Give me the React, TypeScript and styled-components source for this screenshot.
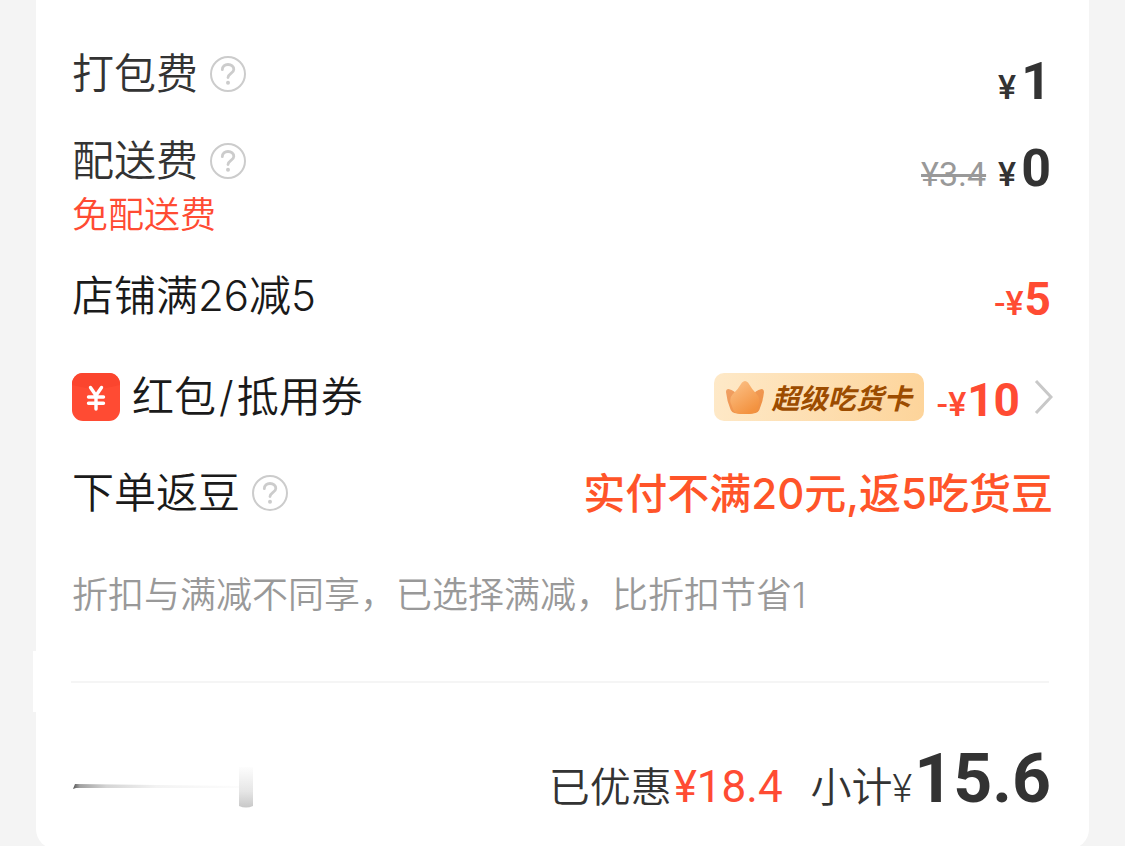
import React from "react";
import styled, { createGlobalStyle } from "styled-components";

const GlobalStyle = createGlobalStyle`
  * { box-sizing: border-box; }
  body {
    margin: 0;
    background: #f4f4f4;
    font-family: Inter, "Noto Sans CJK SC", sans-serif;
    color: #333;
  }
`;

const Card = styled.main`
  margin: 0 36px;
  padding: 44px 36px 32px;
  background: #fff;
  border-radius: 0 0 20px 20px;
`;

const Row = styled.section<{ $gap?: number }>`
  display: flex;
  justify-content: space-between;
  align-items: flex-start;
  margin-top: ${(p) => p.$gap ?? 0}px;
`;

const Label = styled.div<{ $dark?: boolean }>`
  display: flex;
  align-items: center;
  gap: 12px;
  height: 60px;
  font-size: 42px;
  font-weight: 350;
  line-height: 60px;
  white-space: nowrap;
  color: ${(p) => (p.$dark ? "#1a1a1a" : "#333")};
`;

const Slash = styled.span`
  margin: 0 3px;
`;

const HelpButton = styled.button`
  display: flex;
  padding: 0;
  border: 0;
  background: none;
  cursor: pointer;
`;

const FreeNote = styled.p`
  margin: 0;
  font-size: 36px;
  font-weight: 350;
  line-height: 48px;
  color: #ff4b33;
`;

const Price = styled.div<{ $red?: boolean }>`
  display: flex;
  align-items: baseline;
  height: 60px;
  padding-right: 2px;
  font-family: Roboto, sans-serif;
  font-weight: 700;
  line-height: ${(p) => (p.$red ? 66 : 76)}px;
  white-space: nowrap;
  color: ${(p) => (p.$red ? "#ff4b33" : "#333")};
`;

const Sign = styled.span`
  font-size: 34px;
  font-weight: 500;
`;

const Amount = styled.span<{ $large?: boolean }>`
  margin-left: ${(p) => (p.$large ? 5 : 1)}px;
  font-size: ${(p) => (p.$large ? 52 : 46)}px;
`;

const OldPrice = styled.s`
  margin-right: 12px;
  font-size: 34px;
  font-weight: 400;
  color: #999;
`;

const CouponLink = styled.a`
  display: flex;
  align-items: center;
  height: 60px;
  color: inherit;
  text-decoration: none;
`;

const Badge = styled.span`
  display: flex;
  align-items: center;
  gap: 8px;
  height: 48px;
  margin-right: 13px;
  padding: 0 12px;
  border-radius: 10px;
  background: linear-gradient(100deg, #fee9c8, #fdd49a);
  font-family: "Noto Sans CJK SC", sans-serif;
  font-size: 28px;
  font-style: italic;
  font-weight: 700;
  line-height: 48px;
  white-space: nowrap;
  color: #9c4c00;
`;

const Chevron = styled.svg`
  margin-left: 12px;
`;

const Reward = styled.strong`
  font-size: 42px;
  font-weight: 500;
  line-height: 62px;
  white-space: nowrap;
  color: #ff5429;
`;

const Hint = styled.p`
  margin: 46px 0 0;
  font-size: 36px;
  font-weight: 350;
  line-height: 48px;
  color: #999;
`;

const DividerBand = styled.div`
  display: flex;
  align-items: center;
  height: 61px;
  margin: 32px 0 0 -39px;
  padding: 0 4px 0 38px;
  background: #fff;
`;

const Line = styled.hr`
  width: 100%;
  margin: 0;
  border: 0;
  border-top: 2px solid #f5f5f5;
`;

const Total = styled.div`
  display: flex;
  align-items: baseline;
  height: 60px;
  padding-right: 2px;
  font-size: 41px;
  font-weight: 350;
  line-height: 44px;
  white-space: nowrap;
`;

const Saved = styled.span`
  margin: 0 28px 0 2px;
  font-family: Roboto, sans-serif;
  font-size: 44px;
  font-weight: 400;
  color: #ff4b33;
`;

const TotalSign = styled.span`
  margin-right: 2px;
  font-family: Roboto, sans-serif;
  font-size: 38px;
`;

const TotalAmount = styled.strong`
  font-family: Roboto, sans-serif;
  font-size: 68px;
  font-weight: 700;
`;

function Help({ name }: { name: string }) {
  return (
    <HelpButton type="button" aria-label={name}>
      <svg width="36" height="36" viewBox="0 0 36 36" fill="none" stroke="#ccc" strokeLinecap="round">
        <circle cx="18" cy="18" r="17" strokeWidth="2" />
        <path d="M12.300 13.700C12.300 10.500 14.800 8.500 18 8.500c3.400 0 5.800 2 5.800 4.900C23.800 17.200 18 17.400 18 21.500" strokeWidth="2.800" />
        <circle cx="18" cy="26.800" r="2" fill="#ccc" stroke="none" />
      </svg>
    </HelpButton>
  );
}

function RedPacket() {
  return (
    <svg width="48" height="48" viewBox="0 0 48 48" aria-hidden="true">
      <rect width="48" height="48" rx="11" fill="#ff4b33" />
      <path d="M0 12V11A11 11 0 0 1 11 0h26a11 11 0 0 1 11 11v1q-24 7-48 0z" fill="#fb452e" />
      <path d="M18.500 14.500 24 22.500l5.500-8M24 22.500V36M16.500 24h15M16.500 30.200h15" fill="none" stroke="#fff" strokeWidth="3.400" strokeLinecap="round" strokeLinejoin="round" />
    </svg>
  );
}

function Crown() {
  return (
    <svg width="38" height="33" viewBox="0 0 38 33" aria-hidden="true">
      <defs>
        <linearGradient id="crown" x1="0" y1="0" x2="1" y2="1">
          <stop offset="0" stopColor="#f0a065" />
          <stop offset="1" stopColor="#ef8d3c" />
        </linearGradient>
        <linearGradient id="peak" x1="0" y1="0" x2=".6" y2="1">
          <stop offset="0" stopColor="#fcc48c" />
          <stop offset="1" stopColor="#f3923f" />
        </linearGradient>
      </defs>
      <path d="M2.500 8Q9 9 12 16L26 16Q29 9 35.500 8 38 8 38 11 37 20 34 27q-1 5-7 5.500-8 1-16 0-6-.5-7-5.500Q1 20 0 11 0 8 2.500 8z" fill="url(#crown)" />
      <path d="M16 1.500q3-3 6 0 4 7 9 12 3 3 2 8L31 28q-1 4-5 4.500-7 1-14 0Q8 32 7 28L4.500 21.500q-1-5 2-8 5.500-5 9.500-12z" fill="url(#peak)" />
    </svg>
  );
}

function Smudge() {
  return (
    <svg width="190" height="60" viewBox="0 0 190 60" aria-hidden="true">
      <defs>
        <linearGradient id="trail">
          <stop offset="0" stopColor="#555" />
          <stop offset=".04" stopColor="#a0a0a0" />
          <stop offset=".2" stopColor="#d4d4d4" />
          <stop offset=".5" stopColor="#f3f3f3" />
          <stop offset="1" stopColor="#fcfcfc" />
        </linearGradient>
        <linearGradient id="post" x2="0" y2="1">
          <stop offset="0" stopColor="#fdfdfd" />
          <stop offset=".6" stopColor="#e6e6e6" />
          <stop offset="1" stopColor="#c8c8c8" />
        </linearGradient>
      </defs>
      <path d="M1 32 3 27 168 29v2L4 31z" fill="url(#trail)" />
      <path d="M167 10h14v39q-7 3-14 0z" fill="url(#post)" />
    </svg>
  );
}

export default function App() {
  return (
    <>
      <GlobalStyle />
      <Card>
        <Row>
          <Label>打包费<Help name="打包费" /></Label>
          <Price><Sign>¥</Sign><Amount $large>1</Amount></Price>
        </Row>
        <Row $gap={27}>
          <div>
            <Label>配送费<Help name="配送费" /></Label>
            <FreeNote>免配送费</FreeNote>
          </div>
          <Price><OldPrice>¥3.4</OldPrice><Sign>¥</Sign><Amount $large>0</Amount></Price>
        </Row>
        <Row $gap={27}>
          <Label $dark>店铺满26减5</Label>
          <Price $red><Sign>-¥</Sign><Amount>5</Amount></Price>
        </Row>
        <Row $gap={41}>
          <Label $dark><RedPacket /><span>红包<Slash>/</Slash>抵用券</span></Label>
          <CouponLink href="#coupons">
            <Badge><Crown />超级吃货卡</Badge>
            <Price $red><Sign>-¥</Sign><Amount>10</Amount></Price>
            <Chevron width="19" height="36" viewBox="0 0 19 36" fill="none" stroke="#c8c8c8" strokeWidth="3">
              <path d="M2 2 17 18 2 34" />
            </Chevron>
          </CouponLink>
        </Row>
        <Row $gap={36}>
          <Label $dark>下单返豆<Help name="下单返豆" /></Label>
          <Reward>实付不满20元,返5吃货豆</Reward>
        </Row>
        <Hint>折扣与满减不同享，已选择满减，比折扣节省1</Hint>
        <DividerBand><Line /></DividerBand>
        <Row $gap={45}>
          <Smudge />
          <Total>
            已优惠<Saved>¥18.4</Saved>小计<TotalSign>¥</TotalSign><TotalAmount>15.6</TotalAmount>
          </Total>
        </Row>
      </Card>
    </>
  );
}
